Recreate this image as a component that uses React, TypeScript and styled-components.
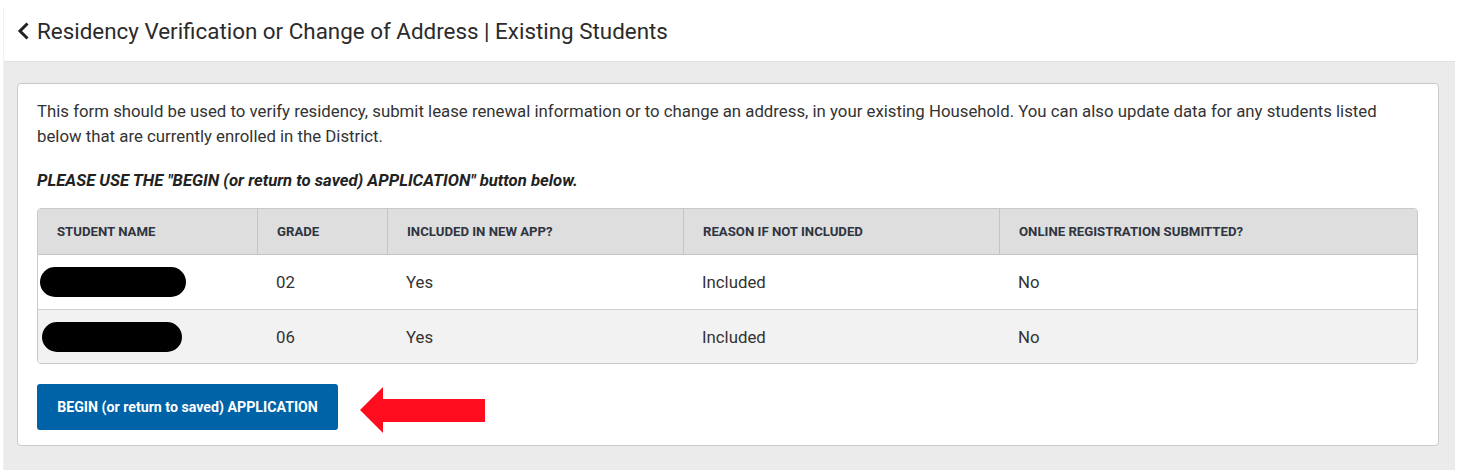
import styled, { createGlobalStyle } from 'styled-components';

const GlobalStyle = createGlobalStyle`
  body {
    margin: 0;
    background: #ffffff;
    font-family: Roboto, "Liberation Sans", Arial, sans-serif;
    color: #333333;
  }
`;

const Page = styled.div`
  width: 1451px;
  margin: 8px 0 0 3px;
  border-left: 1px solid #f0f0f0;
`;

const Header = styled.div`
  height: 54px;
  box-sizing: border-box;
  display: flex;
  align-items: center;
  gap: 6px;
  padding: 0 0 8px 13px;
  border-bottom: 1px solid #e2e2e2;
`;

const BackIcon = styled.svg`
  width: 14px;
  height: 18px;
  margin-top: 1px;
`;

const Title = styled.h1`
  margin: 0;
  font-size: 22.4px;
  font-weight: 400;
  color: #2b2b2b;
`;

const Body = styled.div`
  background: #ebebeb;
  padding: 21px 16px 24px 13px;
`;

const Card = styled.div`
  background: #ffffff;
  border: 1px solid #c9c9c9;
  border-radius: 4px;
  padding: 15px 20px 12px 19px;
`;

const Intro = styled.p`
  margin: 0;
  font-size: 16.8px;
  line-height: 25px;
  color: #333333;
`;

const Notice = styled.p`
  margin: 22px 0 17px 0;
  font-size: 16.7px;
  line-height: 20px;
  font-weight: 700;
  font-style: italic;
  color: #222222;
`;

const Table = styled.div`
  display: grid;
  grid-template-columns: 220px 130px 296px 316px 1fr;
  border: 1px solid #c9c9c9;
  border-radius: 4px;
  overflow: hidden;
`;

const HeadCell = styled.div<{ $last?: boolean }>`
  height: 45px;
  display: flex;
  align-items: center;
  padding: 0 18px 0 19px;
  background: #dedede;
  border-right: ${({ $last }) => ($last ? 'none' : '1px solid #c4c4c4')};
  border-bottom: 1px solid #c4c4c4;
  font-size: 13.2px;
  font-weight: 700;
  color: #2e3440;
`;

const Cell = styled.div<{ $shade?: boolean; $bottom?: boolean }>`
  height: ${({ $bottom }) => ($bottom ? '53px' : '54px')};
  display: flex;
  align-items: center;
  padding: 0 18px;
  background: ${({ $shade }) => ($shade ? '#f2f2f2' : '#ffffff')};
  border-bottom: ${({ $bottom }) => ($bottom ? 'none' : '1px solid #d0d0d0')};
  font-size: 16.8px;
  color: #333333;
`;

const NameCell = styled(Cell)`
  padding: 0 0 0 2px;
`;

const Redacted = styled.span<{ $w: number; $x: number }>`
  display: block;
  width: ${({ $w }) => $w}px;
  height: 30px;
  margin-left: ${({ $x }) => $x}px;
  background: #000000;
  border-radius: 15px;
`;

const Actions = styled.div`
  display: flex;
  align-items: flex-start;
  gap: 22px;
  margin-top: 20px;
`;

const BeginButton = styled.button`
  width: 301px;
  height: 46px;
  border: none;
  border-radius: 3px;
  background: #0063a8;
  color: #ffffff;
  font-family: Roboto, "Liberation Sans", Arial, sans-serif;
  font-size: 14.2px;
  font-weight: 700;
  cursor: pointer;
`;

const Arrow = styled.svg`
  width: 126px;
  height: 46px;
  margin-top: 3px;
`;

const headers = [
  'STUDENT NAME',
  'GRADE',
  'INCLUDED IN NEW APP?',
  'REASON IF NOT INCLUDED',
  'ONLINE REGISTRATION SUBMITTED?',
];

const students = [
  { w: 146, x: 0, grade: '02', included: 'Yes', reason: 'Included', submitted: 'No' },
  { w: 140, x: 2, grade: '06', included: 'Yes', reason: 'Included', submitted: 'No' },
];

export default function App() {
  return (
    <>
      <GlobalStyle />
      <Page>
        <Header>
          <BackIcon viewBox="0 0 14 18">
            <path d="M10.5 1.5 L3 9 L10.5 16.5" fill="none" stroke="#222" strokeWidth="3" />
          </BackIcon>
          <Title>Residency Verification or Change of Address | Existing Students</Title>
        </Header>
        <Body>
          <Card>
            <Intro>
              This form should be used to verify residency, submit lease renewal information or to change an
              address, in your existing Household. You can also update data for any students listed below that
              are currently enrolled in the District.
            </Intro>
            <Notice>PLEASE USE THE "BEGIN (or return to saved) APPLICATION" button below.</Notice>
            <Table>
              {headers.map((h, i) => (
                <HeadCell key={h} $last={i === headers.length - 1}>
                  {h}
                </HeadCell>
              ))}
              {students.map((s, r) => {
                const shade = r % 2 === 1;
                const bottom = r === students.length - 1;
                return [
                  <NameCell key={`n${r}`} $shade={shade} $bottom={bottom}>
                    <Redacted $w={s.w} $x={s.x} />
                  </NameCell>,
                  <Cell key={`g${r}`} $shade={shade} $bottom={bottom}>{s.grade}</Cell>,
                  <Cell key={`i${r}`} $shade={shade} $bottom={bottom}>{s.included}</Cell>,
                  <Cell key={`r${r}`} $shade={shade} $bottom={bottom}>{s.reason}</Cell>,
                  <Cell key={`s${r}`} $shade={shade} $bottom={bottom}>{s.submitted}</Cell>,
                ];
              })}
            </Table>
            <Actions>
              <BeginButton>BEGIN (or return to saved) APPLICATION</BeginButton>
              <Arrow viewBox="0 0 126 46">
                <polygon points="0,23 23,0 23,12 125,12 125,35 23,35 23,46" fill="#ff0c1e" />
              </Arrow>
            </Actions>
          </Card>
        </Body>
      </Page>
    </>
  );
}
